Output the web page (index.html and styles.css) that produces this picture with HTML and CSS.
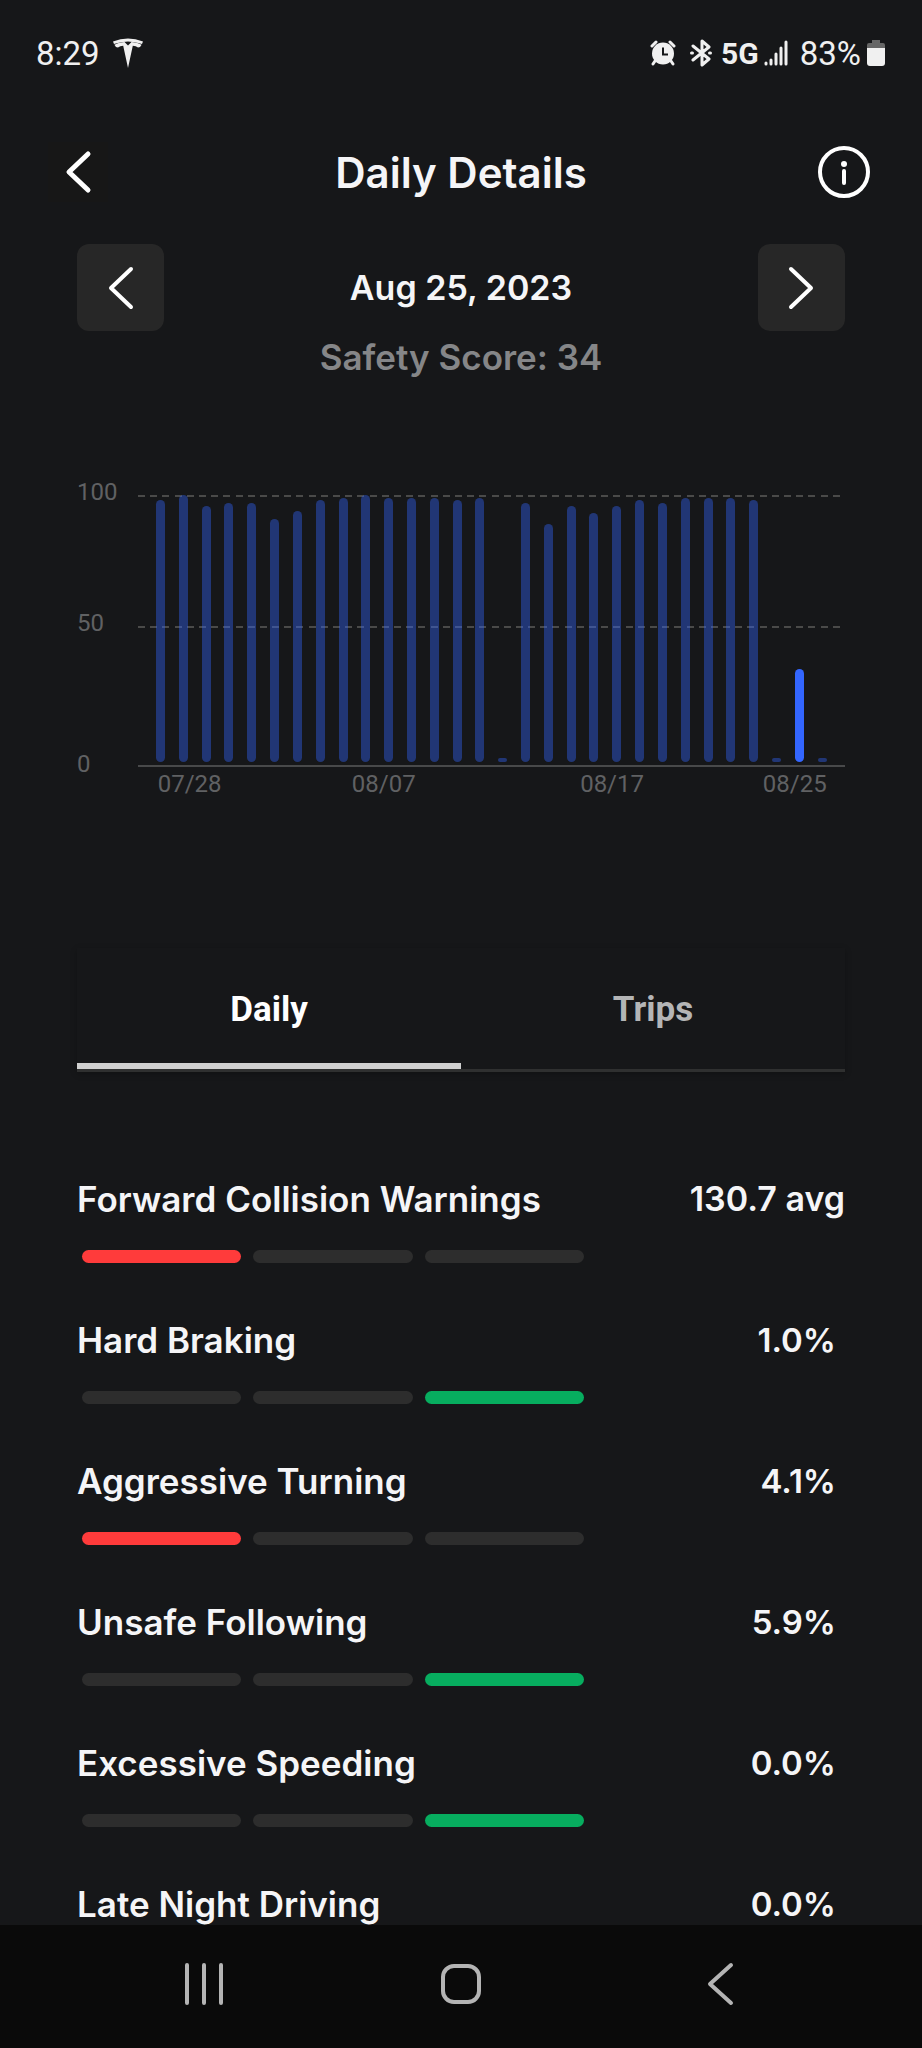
FILE: index.html
```html
<!DOCTYPE html>
<html lang="en">
<head>
  <meta charset="utf-8">
  <meta name="viewport" content="width=device-width, initial-scale=1">
  <title>Daily Details</title>
  <link rel="stylesheet" href="styles.css">
</head>
<body>

<div class="status-bar">
  <span>8:29</span>
  <svg class="tesla" width="32" height="32" viewBox="0 0 32 32" fill="currentColor">
    <path d="M1 4.500Q16-1.500 31 4.500L30 7Q16 1.800 2 7Z"/>
    <path d="M2.400 7.800Q7 5.200 12.500 5L16 8.400L19.500 5Q25 5.200 29.600 7.800Q28.600 10.400 26 10.600Q24 8.700 20.800 8.700L16 31L11.200 8.700Q8 8.700 6 10.600Q3.400 10.400 2.400 7.800Z"/>
  </svg>
  <div class="status-icons">
    <svg width="26" height="26" viewBox="0 0 26 26">
      <g stroke="currentColor" stroke-width="3" stroke-linecap="round">
        <path d="M2 6L6 2M24 6L20 2M5 21L3 24M21 21L23 24"/>
      </g>
      <circle cx="13" cy="13.500" r="11" fill="currentColor"/>
      <path d="M13 7.500V14.500H18" fill="none" stroke="#161719" stroke-width="2"/>
    </svg>
    <svg class="bluetooth" width="24" height="28" viewBox="0 0 24 28" fill="none" stroke="currentColor" stroke-width="3" stroke-linejoin="round" stroke-linecap="round">
      <path d="M4 7L20 20L13 26V2L20 8L4 21M2.500 14H3.500M20.500 14H21.500"/>
    </svg>
    <b class="network">5G</b>
    <svg class="signal" width="24" height="26" viewBox="0 0 24 26" stroke="currentColor" stroke-width="3" stroke-linecap="round">
      <path d="M2 23V24M7 20V24M12 14V24M17 8V24M22 2V24"/>
    </svg>
    <span>83%</span>
    <svg class="battery" width="20" height="28" viewBox="0 0 20 28">
      <path d="M6 1H14V4H17Q19 4 19 6V10H1V6Q1 4 3 4H6Z" fill="#666"/>
      <path d="M1 9H19V24Q19 27 16 27H4Q1 27 1 24Z" fill="currentColor"/>
    </svg>
  </div>
</div>

<header class="header">
  <button class="back" aria-label="Back">
    <svg width="60" height="60" viewBox="0 0 60 60" class="line-icon bold">
      <path d="M40 12L21 30L40 48"/>
    </svg>
  </button>
  <h1>Daily Details</h1>
  <button aria-label="About the safety score">
    <svg width="52" height="52" viewBox="0 0 52 52" class="line-icon">
      <circle cx="26" cy="26" r="24"/>
      <path d="M26 25V37"/>
      <circle cx="26" cy="18" r="3" fill="#fff" stroke="none"/>
    </svg>
  </button>
</header>

<main class="content">
  <div class="day">
    <button class="step" aria-label="Previous day">
      <svg width="44" height="44" viewBox="0 0 44 44" class="line-icon">
        <path d="M32 3L12 22L32 41"/>
      </svg>
    </button>
    <h2>Aug 25, 2023</h2>
    <button class="step" aria-label="Next day">
      <svg width="44" height="44" viewBox="0 0 44 44" class="line-icon">
        <path d="M12 3L32 22L12 41"/>
      </svg>
    </button>
  </div>
  <p class="score">Safety Score: 34</p>

  <div class="chart">
    <div class="y-axis">
      <span>100</span>
      <span>50</span>
      <span>0</span>
    </div>
    <div class="plot">
      <span class="bar" style="--score: 98"></span>
      <span class="bar" style="--score: 100"></span>
      <span class="bar" style="--score: 96"></span>
      <span class="bar" style="--score: 97"></span>
      <span class="bar" style="--score: 97"></span>
      <span class="bar" style="--score: 91"></span>
      <span class="bar" style="--score: 94"></span>
      <span class="bar" style="--score: 98"></span>
      <span class="bar" style="--score: 99"></span>
      <span class="bar" style="--score: 100"></span>
      <span class="bar" style="--score: 99"></span>
      <span class="bar" style="--score: 99"></span>
      <span class="bar" style="--score: 99"></span>
      <span class="bar" style="--score: 98"></span>
      <span class="bar" style="--score: 99"></span>
      <span class="bar" style="--score: 0"></span>
      <span class="bar" style="--score: 97"></span>
      <span class="bar" style="--score: 89"></span>
      <span class="bar" style="--score: 96"></span>
      <span class="bar" style="--score: 93"></span>
      <span class="bar" style="--score: 96"></span>
      <span class="bar" style="--score: 98"></span>
      <span class="bar" style="--score: 97"></span>
      <span class="bar" style="--score: 99"></span>
      <span class="bar" style="--score: 99"></span>
      <span class="bar" style="--score: 99"></span>
      <span class="bar" style="--score: 98"></span>
      <span class="bar" style="--score: 0"></span>
      <span class="bar selected" style="--score: 34"></span>
      <span class="bar" style="--score: 0"></span>
    </div>
    <div class="x-axis">
      <span class="tick-first">07/28</span>
      <span class="tick-07">08/07</span>
      <span class="tick-17">08/17</span>
      <span class="tick-25">08/25</span>
    </div>
  </div>

  <div class="tabs" role="tablist">
    <button class="tab active" role="tab" aria-selected="true">Daily</button>
    <button class="tab" role="tab" aria-selected="false">Trips</button>
  </div>

  <ul class="metrics">
    <li>
      <div class="metric"><span>Forward Collision Warnings</span><span class="average">130.7 avg</span></div>
      <div class="levels"><i class="bad"></i><i></i><i></i></div>
    </li>
    <li>
      <div class="metric"><span>Hard Braking</span><span class="percent">1.0%</span></div>
      <div class="levels"><i></i><i></i><i class="good"></i></div>
    </li>
    <li>
      <div class="metric"><span>Aggressive Turning</span><span class="percent">4.1%</span></div>
      <div class="levels"><i class="bad"></i><i></i><i></i></div>
    </li>
    <li>
      <div class="metric"><span>Unsafe Following</span><span class="percent">5.9%</span></div>
      <div class="levels"><i></i><i></i><i class="good"></i></div>
    </li>
    <li>
      <div class="metric"><span>Excessive Speeding</span><span class="percent">0.0%</span></div>
      <div class="levels"><i></i><i></i><i class="good"></i></div>
    </li>
    <li>
      <div class="metric"><span>Late Night Driving</span><span class="percent">0.0%</span></div>
    </li>
  </ul>
</main>

<nav class="system-nav">
  <button aria-label="Recent apps">
    <svg width="44" height="44" viewBox="0 0 44 44">
      <path d="M4 3V41M21 3V41M38 3V41"/>
    </svg>
  </button>
  <button aria-label="Home">
    <svg width="44" height="44" viewBox="0 0 44 44">
      <rect x="4" y="4" width="36" height="36" rx="11"/>
    </svg>
  </button>
  <button aria-label="Back">
    <svg width="44" height="44" viewBox="0 0 44 44">
      <path d="M36 3L15 22L36 41"/>
    </svg>
  </button>
</nav>

</body>
</html>
```

FILE: styles.css
```css
* {
  box-sizing: border-box;
}
body {
  display: flex;
  flex-direction: column;
  height: 100vh;
  margin: 0;
  background-color: #161719;
  color: #f5f5f7;
  font-family: Inter, sans-serif;
  font-size: 35px;
  font-weight: 600;
}
button {
  display: flex;
  align-items: center;
  justify-content: center;
  padding: 0;
  border: none;
  background: none;
  color: inherit;
}
h1, h2, p, ul {
  margin: 0;
}
svg {
  flex: none;
}
.line-icon {
  fill: none;
  stroke: #fff;
  stroke-width: 4;
  stroke-linecap: round;
  stroke-linejoin: round;
}
.line-icon.bold {
  stroke-width: 5;
}

/* phone status bar */
.status-bar {
  display: flex;
  flex: none;
  align-items: center;
  height: 106px;
  padding: 0 36px;
  color: #f0f0f0;
  font-family: Roboto, sans-serif;
  font-size: 33px;
  font-weight: 400;
}
.tesla {
  margin-left: 12px;
}
.status-icons {
  display: flex;
  align-items: center;
  margin-left: auto;
}
.bluetooth {
  margin: 0 8px 0 13px;
}
.network {
  font-size: 30px;
}
.signal {
  margin: 0 12px 0 5px;
}
.battery {
  margin-left: 5px;
}

.header {
  display: flex;
  flex: none;
  align-items: center;
  justify-content: space-between;
  height: 132px;
  padding: 0 48px;
}
.header h1 {
  font-size: 42px;
  font-weight: 600;
}
.header button {
  width: 60px;
}
.back {
  background-color: #171717;
}

.content {
  flex: 1;
  min-height: 0;
  padding: 6px 77px 0;
  overflow: hidden;
}
.day {
  display: flex;
  align-items: center;
  justify-content: space-between;
}
.day h2 {
  font-size: 34px;
  font-weight: 600;
}
.step {
  width: 87px;
  height: 87px;
  border-radius: 12px;
  background-color: #272727;
}
.score {
  color: #858688;
  line-height: 52px;
  text-align: center;
}

/* score history */
.chart {
  display: grid;
  grid-template-columns: 61px 1fr;
  margin-top: 97px;
  color: #606163;
  font-family: Roboto, sans-serif;
  font-size: 24px;
  font-weight: 400;
  line-height: 24px;
}
.y-axis {
  display: grid;
  grid-template-rows: 131px 141px 24px;
}
.plot {
  --dashes: repeating-linear-gradient(to right, #4a4a49 0 7px, transparent 7px calc(100% / 58));
  display: flex;
  align-items: flex-end;
  justify-content: space-between;
  height: 272px;
  margin-top: 15px;
  padding: 0 18px 3px;
  border-bottom: 2px solid #48494a;
  background-image: var(--dashes), var(--dashes);
  background-repeat: no-repeat;
  background-size: 100% 2px;
  background-position: 0 0, 0 131px;
}
.bar {
  width: 9px;
  height: calc(4px + var(--score) * 263px / 100);
  border-radius: 5px;
  background-color: rgba(51, 102, 255, 0.4);
}
.bar.selected {
  background-color: #3366ff;
}
.x-axis {
  display: grid;
  grid-column: 2;
  grid-template-columns: repeat(30, 1fr);
  margin-top: -4px;
  padding: 0 16px 0 6px;
  text-align: center;
}
.tick-first {
  grid-column: 1 / span 4;
}
.tick-07 {
  grid-column: 10 / span 3;
}
.tick-17 {
  grid-column: 20 / span 3;
}
.tick-25 {
  grid-column: 28 / span 3;
}

.tabs {
  display: flex;
  height: 124px;
  margin-top: 152px;
  border-bottom: 3px solid #2f3030;
  box-shadow: 0 2px 6px rgba(0, 0, 0, 0.25);
}
.tab {
  flex: 1;
  padding-top: 8px;
  border-bottom: 6px solid transparent;
  color: #b4b5b6;
  font-family: Roboto, sans-serif;
  font-size: 35px;
  font-weight: 700;
}
.tab.active {
  border-bottom-color: #d0d0d0;
  color: #fff;
}

.metrics {
  padding: 0;
  margin-top: 103px;
  list-style: none;
}
.metrics li {
  height: 141px;
}
.metric {
  display: flex;
  justify-content: space-between;
  line-height: 48px;
}
.average {
  font-size: 34px;
}
.percent {
  padding-right: 9px;
  font-size: 33px;
}
.levels {
  display: grid;
  grid-template-columns: repeat(3, 1fr);
  gap: 12px;
  width: 66%;
  margin-top: 27px;
  padding-left: 5px;
}
.levels i {
  height: 13px;
  border-radius: 7px;
  background-color: #2d2d2d;
}
.levels .bad {
  background-color: #ff3b3b;
}
.levels .good {
  background-color: #07ad5f;
}

.system-nav {
  display: grid;
  flex: none;
  grid-template-columns: repeat(3, 1fr);
  height: 123px;
  padding: 0 77px 6px;
  background-color: #0a0a0a;
}
.system-nav svg {
  fill: none;
  stroke: #b4b4b4;
  stroke-width: 4;
  stroke-linecap: round;
  stroke-linejoin: round;
}
```
